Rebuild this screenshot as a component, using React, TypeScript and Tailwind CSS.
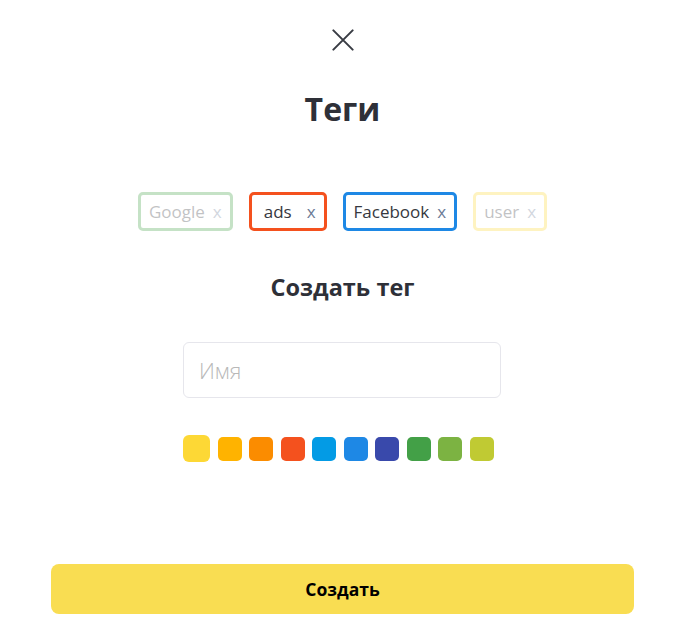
import React from "react";

const tags = [
  { label: "Google", border: "border-[#43A047]", faded: true, pl: "pl-2", gap: "ml-2" },
  { label: "ads", border: "border-[#F4511E]", faded: false, pl: "pl-3", gap: "ml-[15px]" },
  { label: "Facebook", border: "border-[#1E88E5]", faded: false, pl: "pl-2", gap: "ml-2" },
  { label: "user", border: "border-[#FDD835]", faded: true, pl: "pl-2", gap: "ml-2" },
];

const colors = [
  "bg-[#FDD835]",
  "bg-[#FFB300]",
  "bg-[#FB8C00]",
  "bg-[#F4511E]",
  "bg-[#039BE5]",
  "bg-[#1E88E5]",
  "bg-[#3949AB]",
  "bg-[#43A047]",
  "bg-[#7CB342]",
  "bg-[#C0CA33]",
];

export default function App() {
  return (
    <div
      className="w-[685px] h-[629px] bg-white flex flex-col items-center"
      style={{ fontFamily: '"Open Sans", "Noto Sans", sans-serif' }}
    >
      <button className="mt-[29px] w-[22px] h-[22px] flex items-center justify-center">
        <svg width="24" height="24" viewBox="0 0 24 24" fill="none">
          <path d="M1.5 1.5 L22.5 22.5 M22.5 1.5 L1.5 22.5" stroke="#383b43" strokeWidth="2.2" strokeLinecap="round" />
        </svg>
      </button>
      <h1 className="mt-[38px] text-[32px] leading-[40px] font-bold text-[#2e3038]">Теги</h1>

      <div className="mt-[63px] flex gap-4">
        {tags.map((t) => (
          <div
            key={t.label}
            className={`h-[39px] border-[3px] rounded-[5px] ${t.border} ${t.pl} pr-2 flex items-center ${t.faded ? "opacity-30" : ""}`}
          >
            <span className="text-[17px] text-[#363840] leading-[24px]">{t.label}</span>
            <span className={`${t.gap} text-[17px] text-[#6b7a96] leading-[24px]`}>x</span>
          </div>
        ))}
      </div>

      <h2 className="mt-[40px] text-[23.5px] leading-[32px] font-bold text-[#2e3038]">Создать тег</h2>

      <div className="mt-[39px] w-[318px] ml-[-1px]">
        <input
          placeholder="Имя"
          className="w-full h-[56px] border border-[#e6e6ec] rounded-[6px] px-[15px] text-[22px] font-light text-[#333] placeholder:text-[#b8b8b8] outline-none"
        />
        <div className="mt-[37px] flex items-center">
          {colors.map((c, i) => (
            <div
              key={c}
              className={`${c} ${i === 0 ? "w-[27px] h-[27px] rounded-[6px] mr-[8px]" : "w-[24px] h-[24px] rounded-[5px] mr-[7.5px]"}`}
            />
          ))}
        </div>
      </div>

      <button className="mt-[102px] w-[583px] h-[50px] rounded-[8px] bg-[#F9DD52] text-[17.5px] font-bold text-black">
        Создать
      </button>
    </div>
  );
}
